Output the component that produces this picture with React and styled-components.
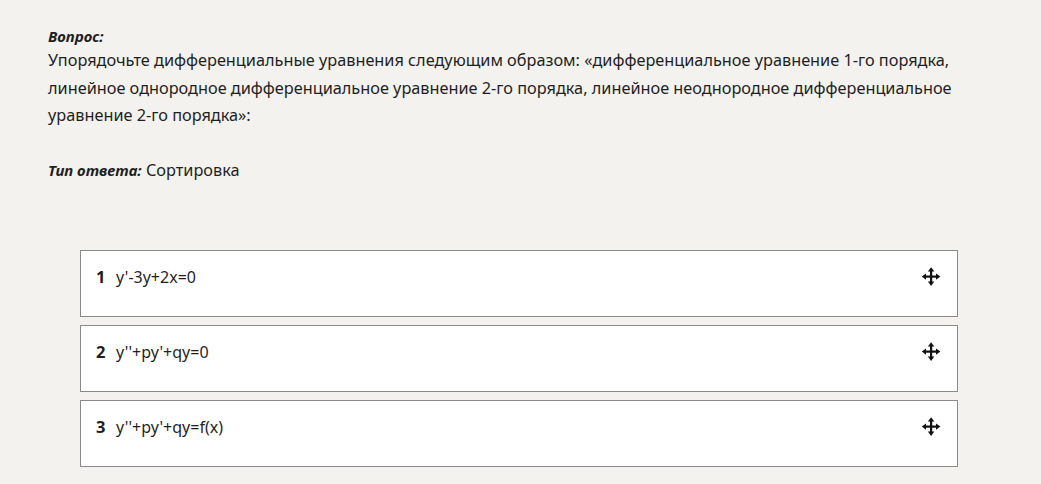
import React from "react";
import styled, { createGlobalStyle } from "styled-components";

const Global = createGlobalStyle`
  html, body { margin: 0; padding: 0; background: #f3f2ef; }
  body { font-family: "Noto Sans", "Open Sans", sans-serif; color: #1f1f1f; }
`;

const Page = styled.div`
  padding: 25px 48px 0 48px;
`;

const Label = styled.div`
  font-weight: 700;
  font-style: italic;
  font-size: 15px;
  line-height: 22px;
`;

const Question = styled.p`
  margin: 0;
  font-size: 16.3px;
  line-height: 27.5px;
  max-width: 940px;
`;

const AnswerType = styled.div`
  margin-top: 29px;
  font-size: 16.3px;
  line-height: 22px;
  b { font-weight: 700; font-style: italic; font-size: 15px; }
`;

const List = styled.div`
  margin: 69px 0 0 32px;
  width: 878px;
  display: flex;
  flex-direction: column;
  gap: 8px;
`;

const Card = styled.div`
  box-sizing: border-box;
  height: 67px;
  background: #fff;
  border: 1px solid #8a8a8a;
  display: flex;
  align-items: flex-start;
  padding: 15px 16px 0 15px;
`;

const Num = styled.span`
  font-weight: 700;
  font-size: 16.5px;
  line-height: 22px;
  width: 20px;
`;

const Formula = styled.span`
  font-size: 16px;
  line-height: 22px;
  flex: 1;
`;

const Handle = styled.span`
  display: flex;
  width: 20px;
  height: 22px;
  align-items: center;
  justify-content: center;
`;

const MoveIcon = () => (
  <svg width="21" height="21" viewBox="0 0 20 20" fill="#111">
    <rect x="9" y="3" width="2.2" height="14" />
    <rect x="3" y="9" width="14" height="2.2" />
    <polygon points="10.1,0.8 13.3,5 6.9,5" />
    <polygon points="10.1,19.4 13.3,15 6.9,15" />
    <polygon points="0.8,10.1 5,6.9 5,13.3" />
    <polygon points="19.4,10.1 15,6.9 15,13.3" />
  </svg>
);

const items = ["y'-3y+2x=0", "y''+py'+qy=0", "y''+py'+qy=f(x)"];

export default function App() {
  return (
    <Page>
      <Global />
      <Label>Вопрос:</Label>
      <Question>
        Упорядочьте дифференциальные уравнения следующим образом: «дифференциальное уравнение 1-го порядка,
        линейное однородное дифференциальное уравнение 2-го порядка, линейное неоднородное дифференциальное
        уравнение 2-го порядка»:
      </Question>
      <AnswerType>
        <b>Тип ответа:</b> Сортировка
      </AnswerType>
      <List>
        {items.map((t, i) => (
          <Card key={i}>
            <Num>{i + 1}</Num>
            <Formula>{t}</Formula>
            <Handle>
              <MoveIcon />
            </Handle>
          </Card>
        ))}
      </List>
    </Page>
  );
}
